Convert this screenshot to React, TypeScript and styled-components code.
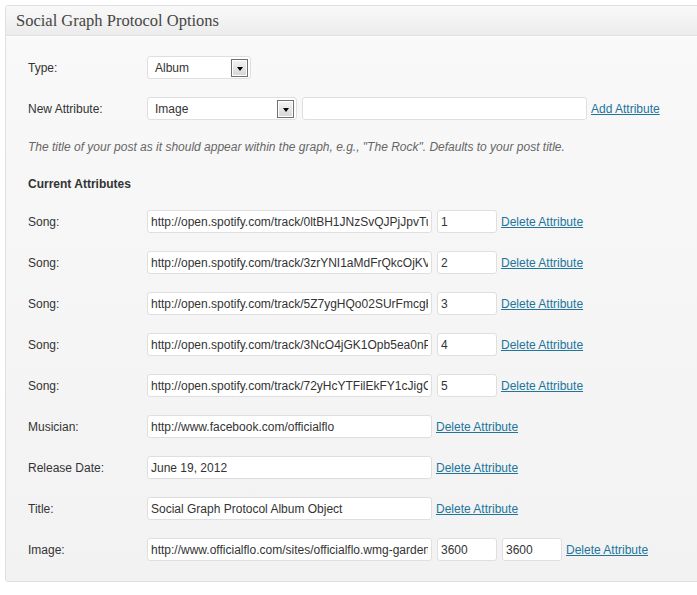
import React from "react";
import styled, { createGlobalStyle } from "styled-components";

const GlobalStyle = createGlobalStyle`
  html, body {
    margin: 0;
    padding: 0;
    background: #ffffff;
    overflow: hidden;
  }
  body {
    font-family: "Liberation Sans", Arial, sans-serif;
    font-size: 12px;
    color: #333333;
  }
`;

const Page = styled.div`
  padding: 5px 0 0 5px;
`;

const Panel = styled.section`
  width: 720px;
  border: 1px solid #dfdfdf;
  border-radius: 3px;
  background: linear-gradient(to bottom, #f9f9f9, #f2f2f2);
  overflow: hidden;
`;

const PanelHeader = styled.h3`
  margin: 0;
  height: 29px;
  line-height: 29px;
  padding: 0 10px;
  font-family: "Liberation Serif", "Times New Roman", serif;
  font-weight: normal;
  font-size: 16.5px;
  color: #464646;
  background: linear-gradient(to bottom, #f9f9f9, #ececec);
  border-bottom: 1px solid #dfdfdf;
  box-shadow: 0 1px 0 #ffffff;
`;

const PanelBody = styled.div`
  display: flex;
  flex-direction: column;
  padding: 20px 0 20px 22px;
`;

const FieldRow = styled.div<{ $mt?: number }>`
  display: flex;
  align-items: center;
  height: 23px;
  margin-top: ${(p) => p.$mt ?? 18}px;
`;

const FieldLabel = styled.label`
  width: 119px;
  flex: none;
  color: #333333;
`;

const Controls = styled.div`
  display: flex;
  align-items: center;
  gap: 5px;
`;

const TextInput = styled.input<{ $w: number }>`
  box-sizing: border-box;
  width: ${(p) => p.$w}px;
  height: 23px;
  margin: 0;
  padding: 0 3px;
  border: 1px solid #dfdfdf;
  border-radius: 3px;
  background: #ffffff;
  font-family: "Liberation Sans", Arial, sans-serif;
  font-size: 12px;
  color: #333333;
  outline: none;
`;

const FakeSelect = styled.div<{ $w: number }>`
  box-sizing: border-box;
  width: ${(p) => p.$w}px;
  height: 23px;
  display: flex;
  align-items: center;
  justify-content: space-between;
  padding: 0 2px 0 7px;
  border: 1px solid #dfdfdf;
  border-radius: 3px;
  background: #ffffff;
  color: #333333;
`;

const SelectArrow = styled.span`
  box-sizing: border-box;
  width: 17px;
  height: 18px;
  display: flex;
  align-items: center;
  justify-content: center;
  border: 1px solid #707070;
  box-shadow: inset 0 0 0 1px #ffffff;
  background: linear-gradient(to bottom, #f4f4f4, #d6d6d6);
  &::after {
    content: "";
    margin-top: 2px;
    border-left: 3.5px solid transparent;
    border-right: 3.5px solid transparent;
    border-top: 4px solid #000000;
  }
`;

const ActionLink = styled.a`
  margin-left: -1px;
  color: #21759b;
  text-decoration: underline;
  cursor: pointer;
`;

const Hint = styled.p`
  margin: 19px 0 0 0;
  line-height: 16px;
  font-style: italic;
  color: #666666;
`;

const SectionTitle = styled.h4`
  margin: 21px 0 0 0;
  line-height: 16px;
  font-size: 12px;
  font-weight: bold;
  color: #333333;
`;

type Attr = {
  label: string;
  values: { v: string; w: number }[];
};

const attrs: Attr[] = [
  { label: "Song:", values: [{ v: "http://open.spotify.com/track/0ltBH1JNzSvQJPjJpvTuNm", w: 285 }, { v: "1", w: 60 }] },
  { label: "Song:", values: [{ v: "http://open.spotify.com/track/3zrYNI1aMdFrQkcOjKVx7q", w: 285 }, { v: "2", w: 60 }] },
  { label: "Song:", values: [{ v: "http://open.spotify.com/track/5Z7ygHQo02SUrFmcgH3bW1", w: 285 }, { v: "3", w: 60 }] },
  { label: "Song:", values: [{ v: "http://open.spotify.com/track/3NcO4jGK1Opb5ea0nP2dVe", w: 285 }, { v: "4", w: 60 }] },
  { label: "Song:", values: [{ v: "http://open.spotify.com/track/72yHcYTFilEkFY1cJigCw8", w: 285 }, { v: "5", w: 60 }] },
  { label: "Musician:", values: [{ v: "http://www.facebook.com/officialflo", w: 285 }] },
  { label: "Release Date:", values: [{ v: "June 19, 2012", w: 285 }] },
  { label: "Title:", values: [{ v: "Social Graph Protocol Album Object", w: 285 }] },
  {
    label: "Image:",
    values: [
      { v: "http://www.officialflo.com/sites/officialflo.wmg-garden.com/files/album.jpg", w: 285 },
      { v: "3600", w: 60 },
      { v: "3600", w: 60 },
    ],
  },
];

export default function App() {
  return (
    <>
      <GlobalStyle />
      <Page>
        <Panel>
          <PanelHeader>Social Graph Protocol Options</PanelHeader>
          <PanelBody>
            <FieldRow $mt={0}>
              <FieldLabel>Type:</FieldLabel>
              <FakeSelect $w={104}>
                <span>Album</span>
                <SelectArrow />
              </FakeSelect>
            </FieldRow>
            <FieldRow>
              <FieldLabel>New Attribute:</FieldLabel>
              <Controls>
                <FakeSelect $w={150}>
                  <span>Image</span>
                  <SelectArrow />
                </FakeSelect>
                <TextInput $w={285} defaultValue="" readOnly />
                <ActionLink>Add Attribute</ActionLink>
              </Controls>
            </FieldRow>
            <Hint>
              The title of your post as it should appear within the graph, e.g., "The Rock". Defaults to your post title.
            </Hint>
            <SectionTitle>Current Attributes</SectionTitle>
            {attrs.map((a, i) => (
              <FieldRow key={i} $mt={18}>
                <FieldLabel>{a.label}</FieldLabel>
                <Controls>
                  {a.values.map((val, j) => (
                    <TextInput key={j} $w={val.w} defaultValue={val.v} readOnly />
                  ))}
                  <ActionLink>Delete Attribute</ActionLink>
                </Controls>
              </FieldRow>
            ))}
          </PanelBody>
        </Panel>
      </Page>
    </>
  );
}
